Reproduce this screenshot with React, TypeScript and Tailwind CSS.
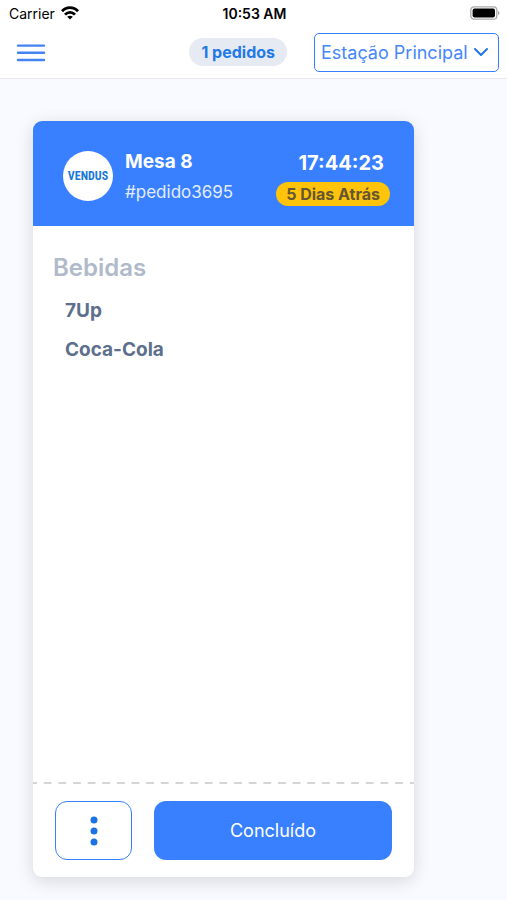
import React from 'react';

const orders = [
  {
    id: 'pedido3695',
    table: 'Mesa 8',
    time: '17:44:23',
    age: '5 Dias Atrás',
    groups: [{ name: 'Bebidas', items: ['7Up', 'Coca-Cola'] }],
  },
];

const WifiIcon = () => (
  <svg className="h-[14px] w-[18px]" viewBox="0 0 18 14" fill="none" stroke="#000" strokeWidth="2.8" aria-hidden="true">
    <path d="M1 5.2C5.4 0.4 12.6 0.4 17 5.2" />
    <path d="M4 8.6C6.8 5.6 11.2 5.6 14 8.6" />
    <path d="M9 13.6L6.2 10.8C7.8 9.4 10.2 9.4 11.8 10.8Z" fill="#000" stroke="none" />
  </svg>
);

const BatteryIcon = () => (
  <svg className="h-[14px] w-[30px]" viewBox="0 0 30 14" aria-hidden="true">
    <rect x="0.8" y="0.8" width="26" height="12.4" rx="3.2" fill="#fff" stroke="#a9a9a9" strokeWidth="1.3" />
    <rect x="2.6" y="2.6" width="22.4" height="8.8" rx="1.8" fill="#000" />
    <path d="M28 4.8C30 5.6 30 8.4 28 9.2Z" fill="#a9a9a9" />
  </svg>
);

const StatusBar = () => (
  <div className="grid grid-cols-3 items-center h-[26px] pl-[9px] pr-[7px] text-[14px] text-black">
    <div className="flex items-center gap-1.5">
      <span>Carrier</span>
      <WifiIcon />
    </div>
    <div className="text-center font-semibold whitespace-nowrap">10:53 AM</div>
    <div className="flex justify-end">
      <BatteryIcon />
    </div>
  </div>
);

const TopBar = () => (
  <div className="flex items-center h-[52px] pl-4 pr-2">
    <button type="button" aria-label="Menu">
      <svg className="h-[20px] w-[30px]" viewBox="0 0 30 20" stroke="#4384f2" strokeWidth="2.4" strokeLinecap="round">
        <path d="M2 3.6H28M2 10.8H28M2 18H28" />
      </svg>
    </button>
    <span className="ml-auto rounded-full bg-[#e6ebf3] px-3 text-[16px] leading-[28px] font-bold text-[#2379e6] whitespace-nowrap">
      1 pedidos
    </span>
    <div className="relative ml-[27px]">
      <select
        aria-label="Estação"
        className="block appearance-none h-[39px] w-[185px] rounded-[5px] border border-[#3880ff] bg-white pl-1.5 pr-6 text-[18px] text-[#4687fa]"
      >
        <option>Estação Principal</option>
      </select>
      <svg
        className="pointer-events-none absolute inset-y-0 right-2.5 my-auto h-[16px] w-[16px]"
        viewBox="0 0 16 16"
        fill="none"
        stroke="#1f76e8"
        strokeWidth="2"
        strokeLinecap="round"
        strokeLinejoin="round"
        aria-hidden="true"
      >
        <path d="M2 5L8 11L14 5" />
      </svg>
    </div>
  </div>
);

const OrderCard = ({ order }: { order: (typeof orders)[number] }) => (
  <article className="flex flex-col w-[381px] max-w-full rounded-[9px] bg-white overflow-hidden shadow-[0_4px_18px_rgba(0,0,0,0.14)]">
    <header className="flex items-center h-[105px] pl-[30px] pr-6 pt-1 bg-[#3880ff] text-white">
      <div className="flex items-center justify-center h-[50px] w-[50px] rounded-full bg-white text-[12px] font-bold text-[#1878d8] font-['Liberation_Sans_Narrow','Roboto_Condensed','Liberation_Sans',sans-serif]">
        VENDUS
      </div>
      <div className="ml-3 pt-0.5">
        <h2 className="text-[19px] leading-[30px] font-bold">{order.table}</h2>
        <p className="text-[17px] leading-[30px] text-[#e4edff]">#{order.id}</p>
      </div>
      <div className="ml-auto flex flex-col items-end pt-0.5">
        <time className="pr-1.5 text-[20px] leading-[30px] font-bold">{order.time}</time>
        <span className="mt-1 rounded-full bg-[#ffc409] px-2.5 text-[16px] leading-[24px] font-bold text-[#665633]">
          {order.age}
        </span>
      </div>
    </header>

    <div className="flex-1 px-5 pt-[26px]">
      {order.groups.map(group => (
        <section key={group.name}>
          <h3 className="text-[24px] leading-[32px] font-semibold text-[#b0bacb]">{group.name}</h3>
          <ul className="mt-[7px] pl-3 text-[19px] leading-[39px] font-bold text-[#5c6f8c]">
            {group.items.map(item => (
              <li key={item}>{item}</li>
            ))}
          </ul>
        </section>
      ))}
    </div>

    {/* ticket tear line */}
    <div className="h-[2px] bg-[linear-gradient(90deg,#d5d5d5_25%,transparent_25%,transparent_75%,#d5d5d5_75%)] bg-[length:calc(100%/26)_2px]" />

    <footer className="flex gap-[22px] px-[22px] pt-[17px] pb-[17px]">
      <button
        type="button"
        aria-label="Mais opções"
        className="flex items-center justify-center h-[59px] w-[77px] rounded-[12px] border border-[#3880ff]"
      >
        <svg className="h-[30px] w-[8px]" viewBox="0 0 8 30" fill="#1a73e0">
          <circle cx="4" cy="4" r="3.5" />
          <circle cx="4" cy="15" r="3.5" />
          <circle cx="4" cy="26" r="3.5" />
        </svg>
      </button>
      <button type="button" className="flex-1 h-[59px] rounded-[12px] bg-[#3880ff] text-[18px] text-white">
        Concluído
      </button>
    </footer>
  </article>
);

const App = () => {
  return (
    <div className="flex flex-col min-h-screen bg-[#f8faff] font-['Inter',sans-serif]">
      <div className="bg-white border-b border-[#e6e8ec]">
        <StatusBar />
        <TopBar />
      </div>
      <main className="flex flex-1 px-[33px] pt-[42px] pb-[23px]">
        {orders.map(order => (
          <OrderCard key={order.id} order={order} />
        ))}
      </main>
    </div>
  );
};

export default App;
